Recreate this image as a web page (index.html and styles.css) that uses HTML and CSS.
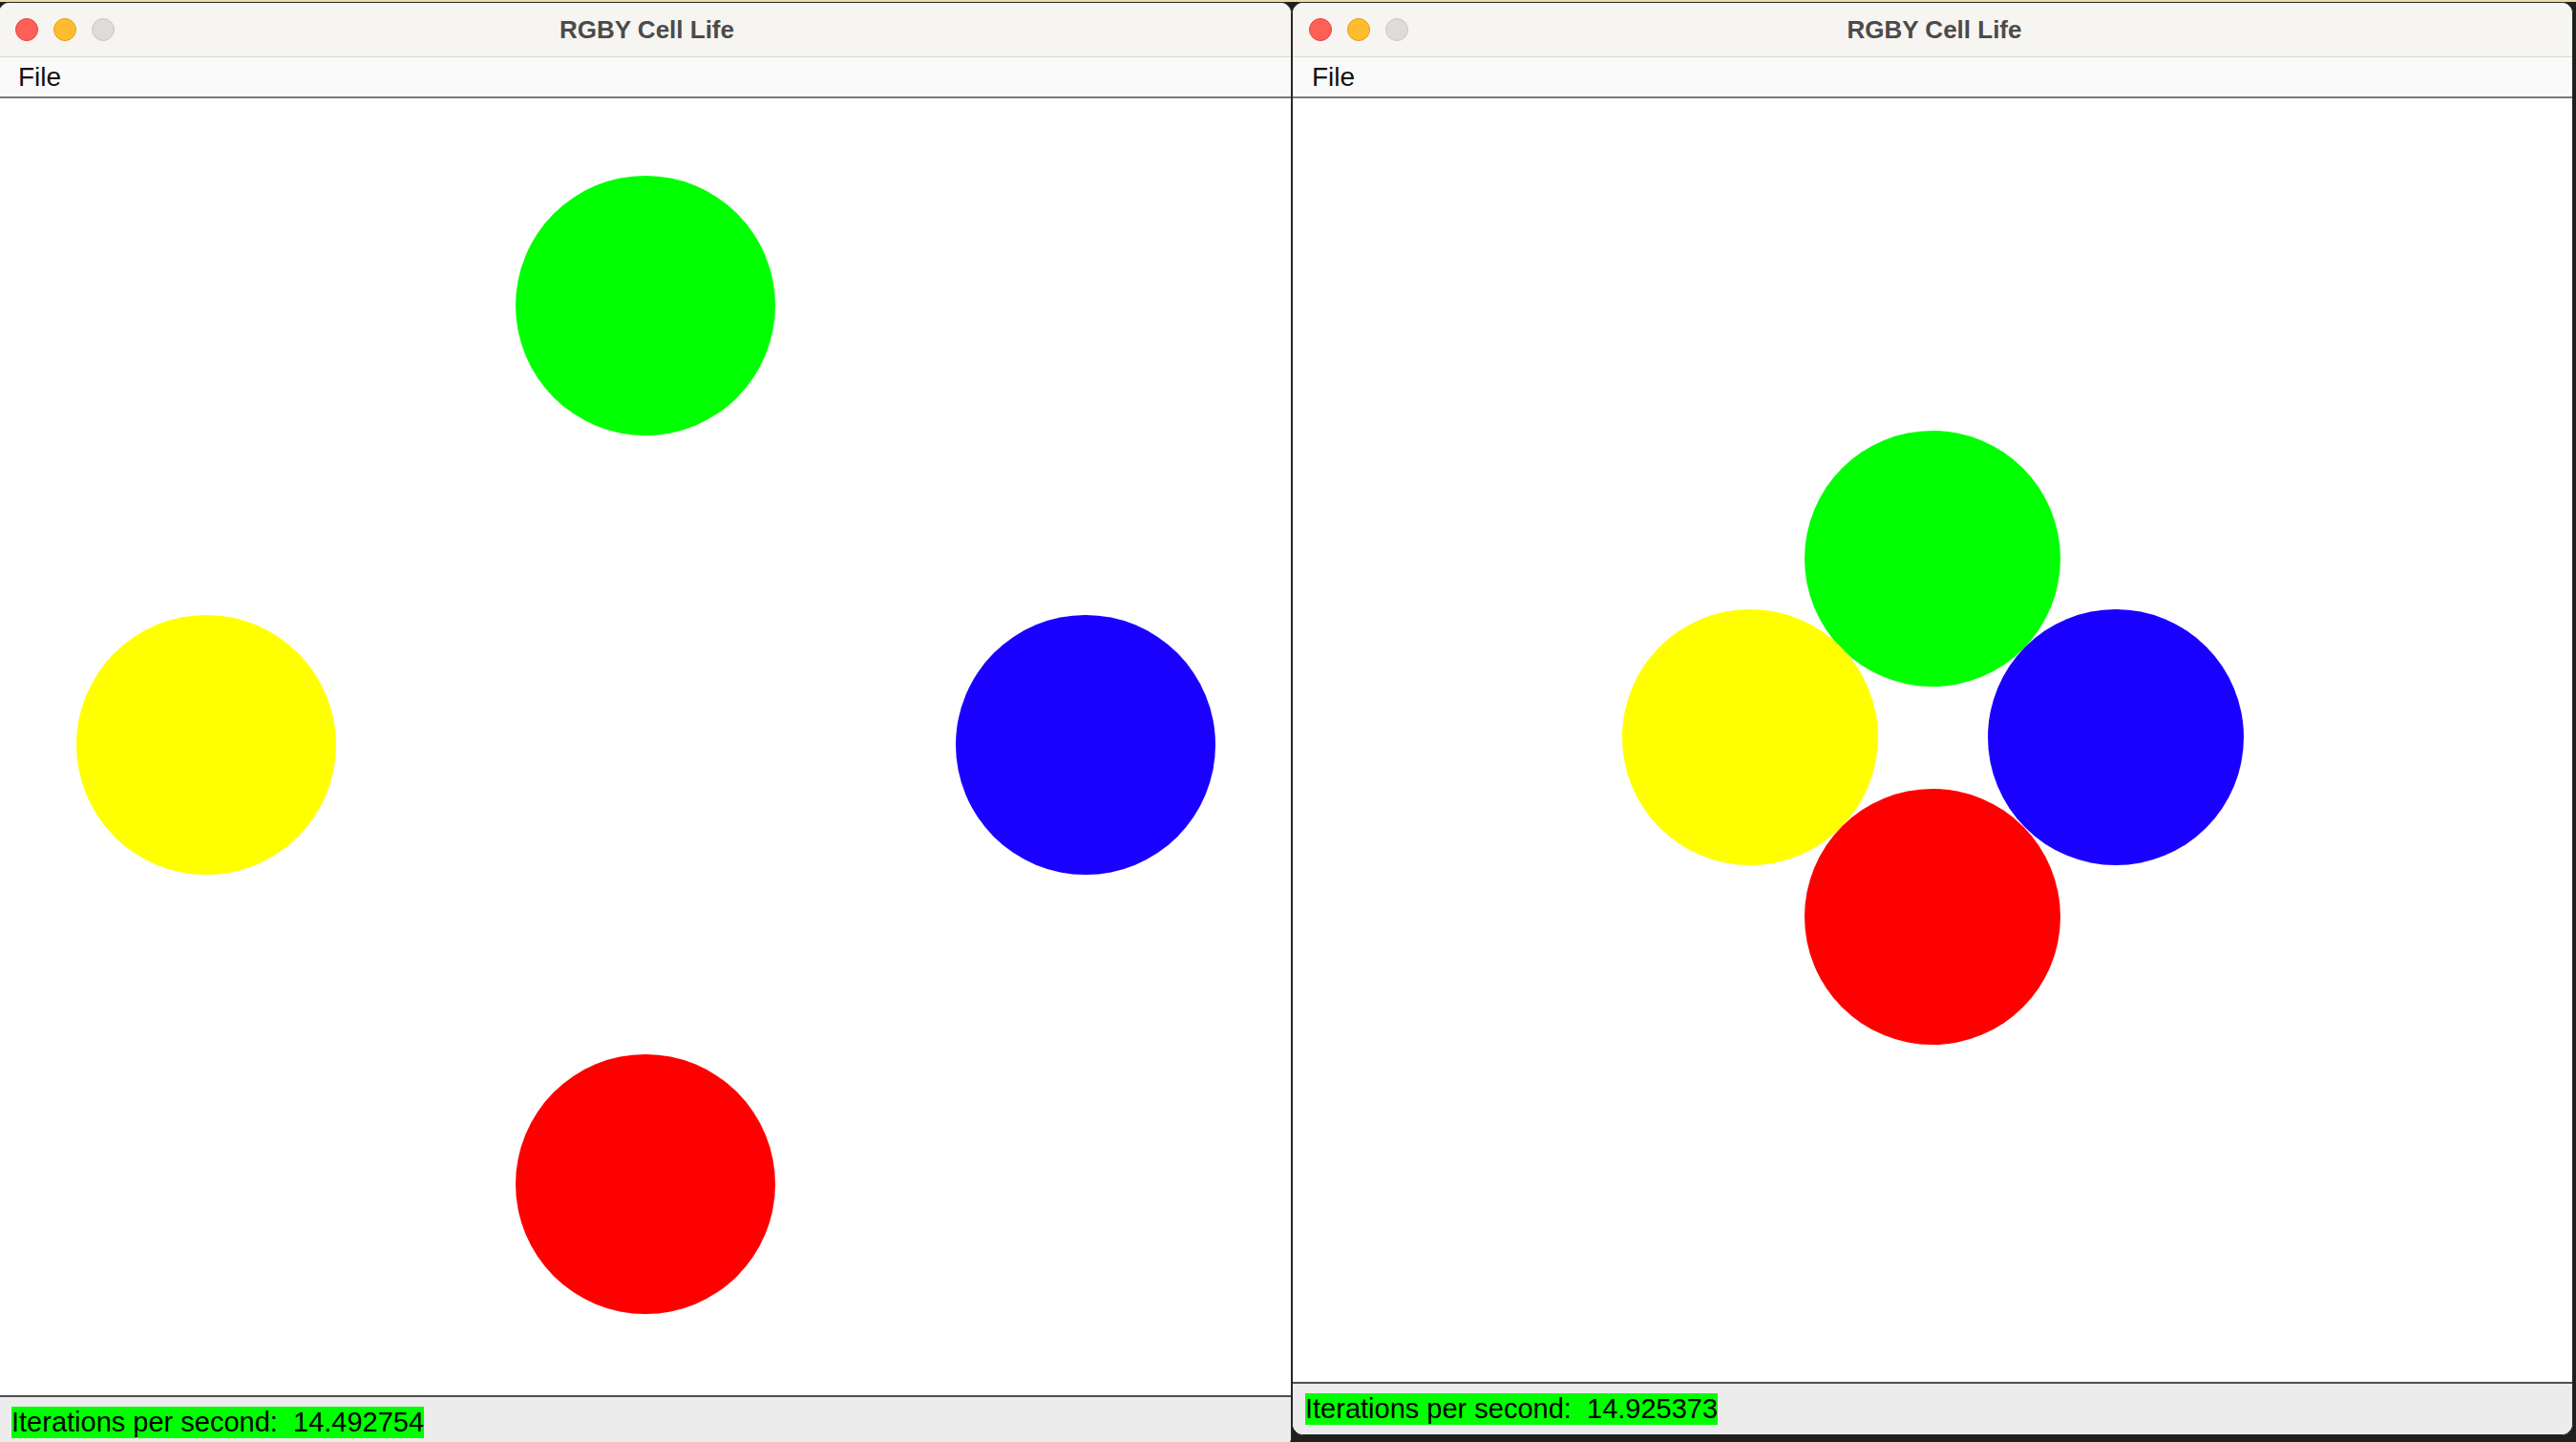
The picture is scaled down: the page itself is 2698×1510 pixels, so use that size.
FILE: index.html
```html
<!DOCTYPE html>
<html>
<head>
<meta charset="utf-8">
<title>RGBY Cell Life</title>
<link rel="stylesheet" href="styles.css">
</head>
<body>
<div class="desktop">
  <section class="window window-left">
    <header class="titlebar">
      <div class="lights">
        <span class="light light-close"></span>
        <span class="light light-min"></span>
        <span class="light light-zoom"></span>
      </div>
      <div class="title">RGBY Cell Life</div>
      <div></div>
    </header>
    <nav class="menubar"><span class="menu-item">File</span></nav>
    <div class="canvas canvas-left">
      <div class="cell cell-lg green" style="left:541px;top:81px"></div>
      <div class="cell cell-lg yellow" style="left:81px;top:541px"></div>
      <div class="cell cell-lg blue" style="left:1002px;top:541px"></div>
      <div class="cell cell-lg red" style="left:541px;top:1001px"></div>
    </div>
    <footer class="statusbar"><span class="rate">Iterations per second:  14.492754</span></footer>
  </section>
  <section class="window window-right">
    <header class="titlebar">
      <div class="lights">
        <span class="light light-close"></span>
        <span class="light light-min"></span>
        <span class="light light-zoom"></span>
      </div>
      <div class="title">RGBY Cell Life</div>
      <div></div>
    </header>
    <nav class="menubar"><span class="menu-item">File</span></nav>
    <div class="canvas canvas-right">
      <div class="cell cell-sm green" style="left:536px;top:348px"></div>
      <div class="cell cell-sm yellow" style="left:345px;top:535px"></div>
      <div class="cell cell-sm blue" style="left:728px;top:535px"></div>
      <div class="cell cell-sm red" style="left:536px;top:723px"></div>
    </div>
    <footer class="statusbar"><span class="rate">Iterations per second:  14.925373</span></footer>
  </section>
</div>
</body>
</html>
```
FILE: styles.css
```css
* { box-sizing: border-box; }

html, body {
  margin: 0;
  padding: 0;
}

body {
  width: 2698px;
  height: 1510px;
  overflow: hidden;
  background: #1f1f1f;
  font-family: "Liberation Sans", Arial, sans-serif;
}

.desktop {
  display: flex;
  align-items: flex-start;
  border-top: 2px solid #e9dca9;
  height: 1510px;
}

.window {
  display: flex;
  flex-direction: column;
  border: 1px solid #262626;
  border-radius: 12px;
  overflow: hidden;
  background: #ffffff;
  flex: none;
}

.window-left {
  width: 1355px;
  margin-left: -2px;
}

.window-right {
  width: 1342px;
}

.titlebar {
  height: 57px;
  flex: none;
  background: #f7f5f1;
  border-bottom: 1px solid #d9d9d9;
  display: grid;
  grid-template-columns: 1fr auto 1fr;
  align-items: center;
}

.lights {
  display: flex;
  align-items: center;
  gap: 16px;
  padding-left: 17px;
}

.light {
  width: 24px;
  height: 24px;
  border-radius: 50%;
  display: block;
}

.light-close {
  background: #fe5f57;
  border: 1px solid #e2463f;
}

.light-min {
  background: #febc2e;
  border: 1px solid #e1a116;
}

.light-zoom {
  background: #dddcda;
  border: 1px solid #c9c8c6;
}

.title {
  font-size: 26px;
  font-weight: bold;
  color: #4b4b4b;
  white-space: nowrap;
  padding-left: 4px;
}

.menubar {
  height: 43px;
  flex: none;
  background: #fafafa;
  border-bottom: 2px solid #7a7a7a;
  display: flex;
  align-items: center;
  padding-left: 20px;
}

.menu-item {
  font-size: 28px;
  color: #111111;
}

.canvas {
  position: relative;
  flex: none;
  background: #ffffff;
}

.canvas-left { height: 1358px; }
.canvas-right { height: 1344px; }

.cell {
  position: absolute;
  border-radius: 50%;
}

.cell-lg { width: 272px; height: 272px; }
.cell-sm { width: 268px; height: 268px; }

.green { background: #00ff00; }
.yellow { background: #ffff00; }
.blue { background: #1a00ff; }
.red { background: #ff0000; }

.statusbar {
  height: 55px;
  flex: none;
  background: #ececec;
  border-top: 2px solid #4f4f4f;
  padding: 10px 0 0 13px;
}

.rate {
  display: inline-block;
  background: #00ff00;
  color: #000000;
  font-size: 29px;
  line-height: 33px;
  height: 33px;
  white-space: pre;
}
```
